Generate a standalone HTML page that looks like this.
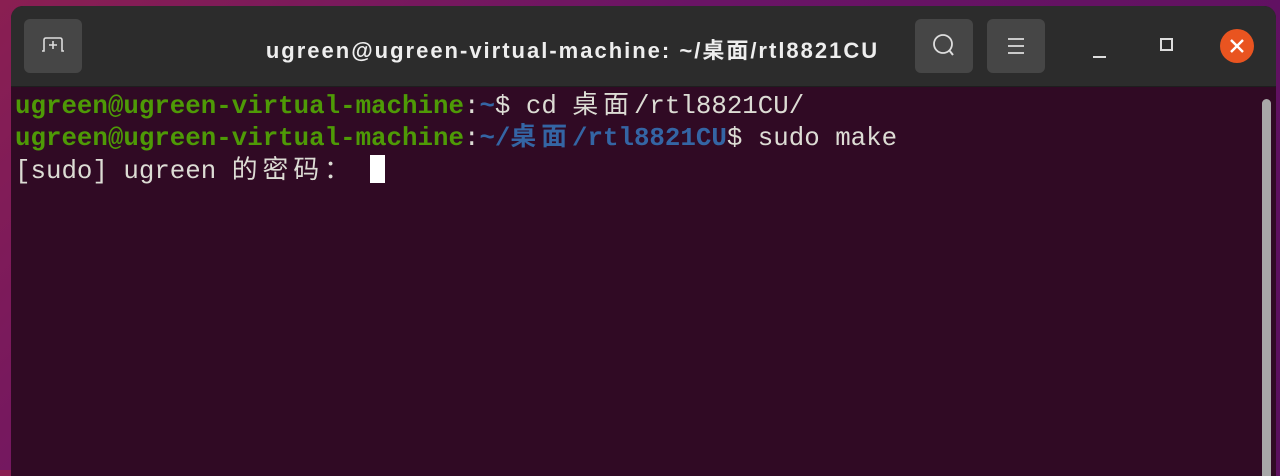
<!DOCTYPE html>
<html><head><meta charset="utf-8"><style>
*{margin:0;padding:0;box-sizing:border-box}
body{width:1280px;height:470px;overflow:hidden;background:linear-gradient(135deg,#8a1f52 0%,#6a1466 40%,#5a0f5e 100%);position:relative}
.win{position:absolute;left:11px;top:6px;width:1265px;height:470px;border-radius:12px 12px 0 0;overflow:hidden;background:#300a24}
.hdr{position:absolute;left:0;top:0;right:0;height:81px;background:#2c2c2c;border-bottom:1px solid #1e1e1e}
.btn{position:absolute;top:13px;width:58px;height:54px;background:#464646;border-radius:6px}
.title{position:absolute;left:0;right:0;top:27px;text-align:center;color:#eee;font:bold 22px "Liberation Sans","Noto Sans CJK SC",sans-serif;letter-spacing:2px;margin-left:-142px}
pre{position:absolute;left:4px;top:85px;font:25.8px/32px "Liberation Mono","Noto Sans CJK SC",monospace;color:#dcdcd4}
.g{color:#4e9a06;font-weight:bold}.b{color:#3465a4;font-weight:bold}
.c{letter-spacing:5px}
.cur{display:inline-block;width:15px;height:28px;background:#fff;vertical-align:-5px}
.sb{position:absolute;left:1251px;top:93px;width:9px;height:400px;background:#a8a8a8;border-radius:5px}
</style></head><body>
<div class="win">
<div class="hdr">
<div class="btn" style="left:13px"><svg width="58" height="54"><path d="M18 32 L20 32 L20 21 Q20 19 22 19 L36 19 Q38 19 38 21 L38 32 L40 32" fill="none" stroke="#ddd" stroke-width="1.6"/><path d="M29 22V30M25 26H33" stroke="#ddd" stroke-width="1.6"/></svg></div>
<div class="title">ugreen@ugreen-virtual-machine: ~/桌面/rtl8821CU</div>
<div class="btn" style="left:904px"><svg width="58" height="54"><circle cx="28" cy="25" r="9" fill="none" stroke="#ddd" stroke-width="1.8"/><path d="M34 31L38 36" stroke="#ddd" stroke-width="2"/></svg></div>
<div class="btn" style="left:976px"><svg width="58" height="54"><path d="M21 20H37M21 27H37M21 34H37" stroke="#ddd" stroke-width="1.8"/></svg></div>
<svg style="position:absolute;left:1075px;top:30px" width="30" height="30"><path d="M7 21H20" stroke="#ddd" stroke-width="2"/></svg>
<svg style="position:absolute;left:1142px;top:25px" width="30" height="30"><rect x="8" y="8" width="11" height="11" fill="none" stroke="#ddd" stroke-width="2"/></svg>
<svg style="position:absolute;left:1208px;top:23px" width="36" height="36"><circle cx="18" cy="17" r="17" fill="#e95420"/><path d="M12 11L24 23M24 11L12 23" stroke="#fff" stroke-width="2.4"/></svg>
</div>
<pre><span class="g">ugreen@ugreen-virtual-machine</span>:<span class="b">~</span>$ cd <span class="c">桌面</span>/rtl8821CU/
<span class="g">ugreen@ugreen-virtual-machine</span>:<span class="b">~/<span class="c">桌面</span>/rtl8821CU</span>$ sudo make
[sudo] ugreen <span class="c">的密码：</span> <span class="cur"></span></pre>
<div class="sb"></div>
</div>
</body></html>
